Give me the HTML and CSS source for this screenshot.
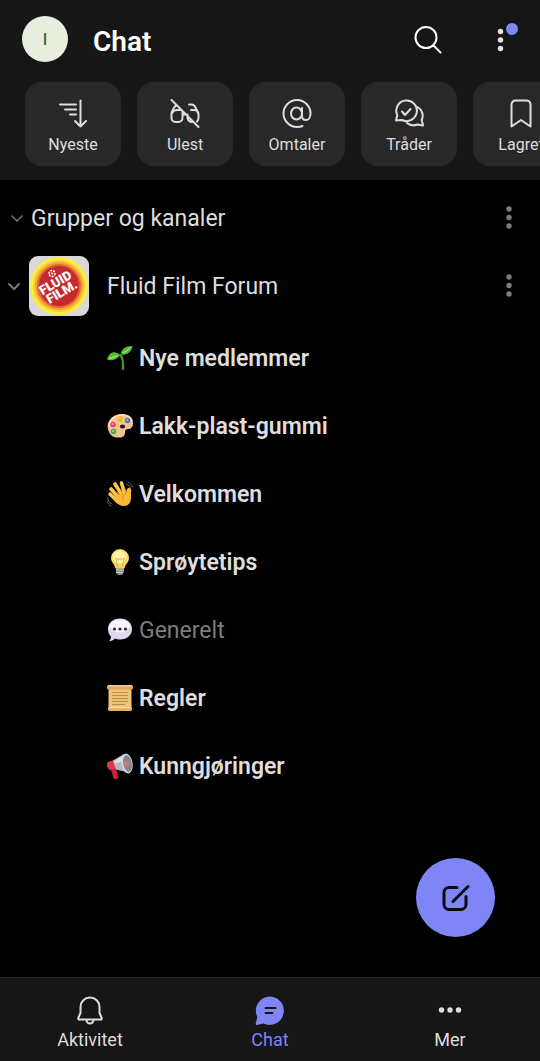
FILE: index.html
```html
<!DOCTYPE html>
<html lang="no">
<head>
  <meta charset="UTF-8">
  <meta name="viewport" content="width=device-width, initial-scale=1.0">
  <title>Chat</title>
  <link rel="stylesheet" href="styles.css">
</head>
<body>
  <div class="app">
    <header class="header">
      <div class="topbar">
        <button class="avatar" aria-label="Profil">I</button>
        <h1 class="title">Chat</h1>
        <button class="icon-btn" aria-label="Søk">
          <svg class="icon line" viewBox="0 0 30 30"><circle cx="13" cy="13.5" r="10.5"/><path d="M20.500 21.500l7 7"/></svg>
        </button>
        <button class="icon-btn more" aria-label="Flere valg">
          <svg class="icon" viewBox="0 0 30 30"><circle cx="14.500" cy="7.5" r="2.7"/><circle cx="14.500" cy="16" r="2.7"/><circle cx="14.500" cy="24.5" r="2.7"/></svg>
          <span class="badge"></span>
        </button>
      </div>

      <div class="filters">
        <button class="filter">
          <svg class="icon line" viewBox="0 0 30 30"><path d="M2 5.5h16M7 10.5h11M12 15.5h6M22.5 1.5v26M17 22l5.5 5.5L28 22"/></svg>
          Nyeste
        </button>
        <button class="filter">
          <svg class="icon line" viewBox="0 0 30 30"><path d="M1.5 1l27 27M6.500 6.500C4 7 3.500 9.500 1.500 14v5a4 4 0 0 0 4 4h3a4 4 0 0 0 4-4v-6M2 14C3 12 5 11 7.500 11h3M12.500 15.500h5v3.500c0 2 2 4 4.500 4M19 5.500h2.500c2.500 0 3.500 1.500 4.500 4L28.500 15v4c0 1.500-.5 2.500-1.500 3.500M21 11h3c2 0 4 1 4.500 3.500"/></svg>
          Ulest
        </button>
        <button class="filter">
          <svg class="icon line" viewBox="0 0 30 30"><ellipse cx="14.500" cy="14.500" rx="5.500" ry="6"/><path d="M20 9v8c0 2.500 1.500 4 4 4s4.500-2.500 4.500-6.500A13.500 13.500 0 1 0 15 28c2 0 4-.3 5.500-1"/></svg>
          Omtaler
        </button>
        <button class="filter">
          <svg class="icon line" viewBox="0 0 30 30"><path d="M2 21.500l1.300-5.300A10.300 10.300 0 1 1 8 21zM8 12.500l3 3.500 5.500-6M23.500 8a10 10 0 0 1 4.200 13l1.300 5.500-5.500-1a10.500 10.500 0 0 1-10.500-1.500"/></svg>
          Tråder
        </button>
        <button class="filter">
          <svg class="icon line" viewBox="0 0 30 30"><path d="M5.500 5.500a4 4 0 0 1 4-4h11a4 4 0 0 1 4 4v22L15 21l-9.500 6.500z"/></svg>
          Lagret
        </button>
      </div>
    </header>

    <main class="content">
      <div class="row section">
        <button class="chevron" aria-label="Skjul grupper"><svg viewBox="0 0 14 14"><path d="M2 5l5 5 5-5"/></svg></button>
        <h2 class="name">Grupper og kanaler</h2>
        <button class="kebab" aria-label="Valg for grupper">
          <svg class="icon" viewBox="0 0 30 30"><circle cx="15" cy="6" r="2.700"/><circle cx="15" cy="14.500" r="2.700"/><circle cx="15" cy="23" r="2.700"/></svg>
        </button>
      </div>

      <div class="row team">
        <button class="chevron bold" aria-label="Skjul kanaler"><svg viewBox="0 0 14 14"><path d="M2 5l5 5 5-5"/></svg></button>
        <svg class="logo" viewBox="0 0 60 60" role="img" aria-label="Fluid Film">
          <rect width="60" height="60" rx="9" fill="#d9d9dc"/>
          <circle cx="30" cy="30" r="29" fill="#fbee3c"/>
          <circle cx="30" cy="30" r="26" fill="#f8cf3a"/>
          <circle cx="30" cy="30" r="24" fill="#f2a237"/>
          <circle cx="30" cy="30" r="22" fill="#e5632f"/>
          <circle cx="30" cy="30" r="20" fill="#c5282f"/>
          <g class="logo-text" transform="rotate(-30 30 31)">
            <text x="29" y="30" text-anchor="middle">FLUID</text>
            <text x="30" y="41" text-anchor="middle">FILM.</text>
          </g>
          <circle cx="23" cy="17.500" r="3" fill="none" stroke="#fff" stroke-width="1.500" stroke-dasharray="2 1"/>
          <circle cx="23" cy="17.500" r="1" fill="#fff"/>
        </svg>
        <h3 class="name">Fluid Film Forum</h3>
        <button class="kebab" aria-label="Valg for Fluid Film Forum">
          <svg class="icon" viewBox="0 0 30 30"><circle cx="15" cy="6" r="2.700"/><circle cx="15" cy="14.500" r="2.700"/><circle cx="15" cy="23" r="2.700"/></svg>
        </button>
      </div>

      <ul class="channels">
        <li><a class="channel" href="#nye-medlemmer">
          <svg class="emoji" viewBox="0 0 26 26">
            <path d="M11.500 10c3.500 3 4 8 3 14.500 1 .5 2 .5 2.700 0C17.500 18 17 12 14 9z" fill="#3f9b2c"/>
            <path d="M14 9.500C14 4 18 1 25.500 1 25 7 20 10.500 14 9.500z" fill="#4fb32d"/>
            <path d="M0 14.500C2 7 8 5 13 10c-3 5-8 6-13 4.500z" fill="#55bb33"/>
            <path d="M15.500 8c3-1 6-3 8-6M2 13.500c3-1 6-1.500 9-3" fill="none" stroke="#a5e36a" stroke-width="1.200"/>
          </svg>
          Nye medlemmer
        </a></li>
        <li><a class="channel" href="#lakk-plast-gummi">
          <svg class="emoji" viewBox="0 0 26 26">
            <path d="M1 16C-1 8 6 1 15 1c7 0 11 4 11 9 0 4-2 6-5 6-2 0-3 1-3 3 .5 5-4 6-8 5.500C5 24 2 21 1 16z" fill="#f3c295"/>
            <path d="M2 14C2 7 8 2 15 2c5 0 9 2 10 6" fill="none" stroke="#ffe3bd" stroke-width="1.500"/>
            <ellipse cx="15.500" cy="13.500" rx="2.600" ry="2" fill="#211a16"/>
            <circle cx="13" cy="6" r="2.700" fill="#f2b51f"/><circle cx="20.500" cy="7.500" r="2.700" fill="#2e83d3"/>
            <circle cx="6" cy="11.500" r="2.700" fill="#dd4465"/><circle cx="6.500" cy="18.500" r="2.700" fill="#4ba845"/>
            <g fill="#fff" opacity=".5"><circle cx="12.500" cy="5.500" r="1"/><circle cx="20" cy="7" r="1"/><circle cx="5.500" cy="11" r="1"/><circle cx="6" cy="18" r="1"/></g>
          </svg>
          Lakk-plast-gummi
        </a></li>
        <li><a class="channel" href="#velkommen">
          <svg class="emoji" viewBox="0 0 26 26">
            <path d="M4 8l8 9M8 3l7 11M14.500 2L18 14" stroke="#ffc64a" stroke-width="3.600" stroke-linecap="round"/>
            <path d="M3 13l7 7" stroke="#ffc64a" stroke-width="3.400" stroke-linecap="round"/>
            <path d="M8 14l11-3c1-3 2-5 4-4s1 4 1 7c.5 7-2 11-7 11-4 0-7-2-10-6z" fill="#fcb935"/>
            <path d="M10 11l3 3M13 8l3 5M18 8l1 4M19 13c-3 1-4 3-3 6" fill="none" stroke="#d38b20" stroke-width=".9" stroke-linecap="round"/>
            <path d="M19 3c2 0 4 2 4.500 4M21 1c2 1 4 3 4.500 5M1 17c0 3 1 5 4 6M0 20c0 2 2 4 4 5" fill="none" stroke="#6b6d70" stroke-width="1" stroke-linecap="round"/>
          </svg>
          Velkommen
        </a></li>
        <li><a class="channel" href="#sproytetips">
          <svg class="emoji" viewBox="0 0 26 26">
            <path d="M9 19h8v4l-2 3h-4l-2-3z" fill="#84898d"/>
            <path d="M9 21h8M9 23.500h7" stroke="#c9ccd0" stroke-width="1"/>
            <path d="M13 0a9 9 0 0 1 9 9c0 5-4 6-4.500 10.500h-9C8 15 4 14 4 9a9 9 0 0 1 9-9z" fill="#fbd656"/>
            <ellipse cx="12.500" cy="8" rx="7" ry="6.500" fill="#fff1a8"/>
            <path d="M11 18L8.500 9l3 2 1.500-2 1.500 2 3-2L15 18" fill="none" stroke="#cfa94c" stroke-width=".8"/>
          </svg>
          Sprøytetips
        </a></li>
        <li><a class="channel read" href="#generelt">
          <svg class="emoji" viewBox="0 0 26 26">
            <path d="M13 1.500c7 0 12 4.500 12 10.500s-5 10.500-12 10.500c-2 0-3.500-.3-5-1C6 23.500 4 24 2.500 24c1-1.500 1.500-3 1.500-4.500C2 17.500 1 15 1 12 1 6 6 1.500 13 1.500z" fill="#e2d9f0"/>
            <ellipse cx="13" cy="9" rx="10" ry="6.500" fill="#f7f3fc"/>
            <g fill="#2a2730"><circle cx="7.500" cy="12" r="1.600"/><circle cx="13" cy="12" r="1.600"/><circle cx="18.500" cy="12" r="1.600"/></g>
          </svg>
          Generelt
        </a></li>
        <li><a class="channel" href="#regler">
          <svg class="emoji" viewBox="0 0 26 26">
            <path d="M1.500 2h23v22h-23z" fill="#efc478"/>
            <rect x="0" y="0" width="26" height="4.500" rx="1.500" fill="#dfa75a"/>
            <rect x="1" y="22" width="24" height="4" rx="1.500" fill="#e8b15c"/>
            <path d="M1 1h24M2 22.500h22" stroke="#ffe0a0" stroke-width="1"/>
            <path d="M5 7.500h16M5 10.500h16M5 13.500h16M5 16.500h16M5 19.500h13" stroke="#b98a48" stroke-width="1"/>
          </svg>
          Regler
        </a></li>
        <li><a class="channel" href="#kunngjoringer">
          <svg class="emoji" viewBox="0 0 26 26">
            <path d="M3.500 15l5-1 3 10c0 2-4 3-5 1z" fill="#c9213e"/>
            <path d="M1 9l6-2 3 8-7 2C0 16-1 10 1 9z" fill="#e4364f"/>
            <path d="M6 7.500L17 1l6 19-14-3.500z" fill="#b3bac0"/>
            <path d="M7 8l10-6 1 5-10 4z" fill="#dde1e5"/>
            <ellipse cx="20" cy="10.500" rx="5.500" ry="10" transform="rotate(-10 20 10.500)" fill="#d4d9dd"/>
            <ellipse cx="20.500" cy="10.500" rx="4.200" ry="8.500" transform="rotate(-10 20.500 10.500)" fill="#7f878e"/>
            <ellipse cx="19.500" cy="10.500" rx="2.300" ry="3" fill="#d5737d"/>
          </svg>
          Kunngjøringer
        </a></li>
      </ul>

      <button class="compose" aria-label="Ny chat">
        <svg class="icon line" viewBox="0 0 30 30"><path d="M16 4.500H8a5 5 0 0 0-5 5v12a5 5 0 0 0 5 5h12a5 5 0 0 0 5-5V13.500M27 3.500L12 18.500"/></svg>
      </button>
    </main>

    <nav class="tabs">
      <a class="tab" href="#aktivitet">
        <svg class="icon line" viewBox="0 0 30 30"><path d="M15 2.500a9.500 9.500 0 0 0-9.500 9.500v6l-2.200 5c-.3.900.1 1.500 1 1.500h21.400c.900 0 1.300-.6 1-1.500l-2.200-5v-6A9.500 9.500 0 0 0 15 2.500zM11.500 25a3.500 3.500 0 0 0 7 0"/></svg>
        Aktivitet
      </a>
      <a class="tab active" href="#chat">
        <svg class="icon" viewBox="0 0 30 30"><path d="M15 1.500a14.200 14.200 0 1 1-6.500 27L2 30c-1 .2-1.500-.4-1.300-1.300L2.300 22A14.200 14.200 0 0 1 15 1.500z"/><path class="cut" d="M10.500 13h10M10.500 18h7"/></svg>
        Chat
      </a>
      <a class="tab" href="#mer">
        <svg class="icon" viewBox="0 0 30 30"><circle cx="6.500" cy="15" r="2.700"/><circle cx="15" cy="15" r="2.700"/><circle cx="23.500" cy="15" r="2.700"/></svg>
        Mer
      </a>
    </nav>
  </div>
</body>
</html>
```
FILE: styles.css
```css
:root {
  --bar: #161616;
  --card: #282828;
  --text: #dedede;
  --muted: #7c7c7c;
  --accent: #7f85f5;
}

* {
  box-sizing: border-box;
}

body {
  margin: 0;
  background: #000;
  color: var(--text);
  font-family: Roboto, sans-serif;
}

button {
  padding: 0;
  border: 0;
  background: none;
  color: inherit;
  font: inherit;
  cursor: pointer;
}

a {
  color: inherit;
  text-decoration: none;
}

h1, h2, h3, ul {
  margin: 0;
  padding: 0;
}

svg {
  display: block;
  flex-shrink: 0;
}

.app {
  display: flex;
  flex-direction: column;
  min-height: 100vh;
}

.icon {
  width: 30px;
  height: 30px;
  fill: currentColor;
}

.icon.line {
  fill: none;
  stroke: currentColor;
  stroke-width: 2;
  stroke-linecap: round;
  stroke-linejoin: round;
}

.header {
  padding-bottom: 14px;
  background: var(--bar);
}

.topbar {
  display: flex;
  align-items: center;
  height: 82px;
  padding: 0 24px 4px 22px;
}

.avatar {
  width: 46px;
  height: 46px;
  border-radius: 50%;
  background: #e8eedd;
  color: #4c662c;
  font-size: 16px;
  font-weight: 500;
}

.title {
  flex: 1;
  margin-left: 25px;
  padding-top: 6px;
  color: #fff;
  font-size: 28px;
  font-weight: 600;
  line-height: 34px;
}

.icon-btn {
  position: relative;
  margin-left: 43px;
  color: #fff;
}

.more {
  color: #e4e4e4;
}

.badge {
  position: absolute;
  top: -1px;
  right: -2px;
  width: 12px;
  height: 12px;
  border-radius: 50%;
  background: var(--accent);
}

.filters {
  display: flex;
  gap: 16px;
  padding: 0 25px;
  overflow-x: auto;
  scrollbar-width: none;
}

.filter {
  display: flex;
  flex: 0 0 96px;
  flex-direction: column;
  align-items: center;
  gap: 6px;
  padding: 17px 0 11px;
  border-radius: 17px;
  background: var(--card);
  font-size: 16px;
  line-height: 20px;
}

.content {
  position: relative;
  flex: 1;
  padding-top: 4px;
}

.row {
  display: flex;
  align-items: center;
  height: 68px;
  padding-right: 16px;
}

.section {
  padding-left: 10px;
}

.team {
  padding-left: 7px;
}

.name {
  flex: 1;
  padding-top: 2px;
  font-size: 23px;
  font-weight: 400;
  line-height: 32px;
}

.section .name {
  margin-left: 7px;
}

.team .name {
  margin-left: 18px;
}

.chevron {
  color: var(--muted);
}

.chevron svg {
  width: 14px;
  height: 14px;
  fill: none;
  stroke: currentColor;
  stroke-width: 1.4;
  stroke-linecap: round;
}

.chevron.bold svg {
  stroke-width: 2;
}

.kebab {
  color: var(--muted);
}

.logo {
  width: 60px;
  height: 60px;
  margin-left: 8px;
}

.logo-text {
  fill: #fff;
  font-size: 13px;
  font-weight: 900;
}

.channels {
  padding-top: 4px;
  list-style: none;
}

.channel {
  display: flex;
  align-items: center;
  gap: 6px;
  height: 68px;
  padding-left: 107px;
  font-size: 23px;
  font-weight: 600;
}

.channel.read {
  color: var(--muted);
  font-weight: 400;
}

.emoji {
  width: 26px;
  height: 26px;
}

.compose {
  position: absolute;
  right: 45px;
  bottom: 40px;
  display: grid;
  place-items: center;
  width: 79px;
  height: 79px;
  border-radius: 50%;
  background: var(--accent);
  color: #0b0b14;
}

.compose .icon {
  stroke-width: 3;
}

.tabs {
  display: grid;
  grid-template-columns: repeat(3, 1fr);
  border-top: 1px solid #2a2a2a;
  background: var(--bar);
}

.tab {
  display: flex;
  flex-direction: column;
  align-items: center;
  gap: 4px;
  padding: 17px 0 10px;
  font-size: 18px;
  line-height: 22px;
}

.tab.active {
  color: var(--accent);
}

.cut {
  fill: none;
  stroke: var(--bar);
  stroke-width: 2;
  stroke-linecap: round;
}
```
